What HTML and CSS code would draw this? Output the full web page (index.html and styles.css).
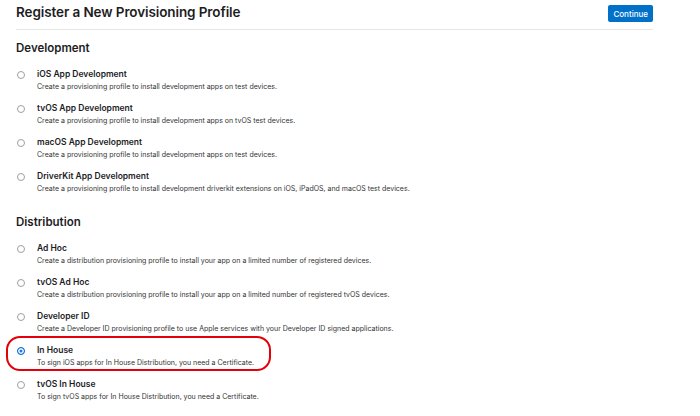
FILE: index.html
```html
<!DOCTYPE html>
<html lang="en">
<head>
  <meta charset="UTF-8" />
  <meta name="viewport" content="width=device-width, initial-scale=1.0" />
  <title>Register a New Provisioning Profile</title>
  <link rel="stylesheet" href="styles.css">
</head>
<body>
  <div class="page">
    <header class="top">
      <h1>Register a New Provisioning Profile</h1>
      <button class="btn" type="button">Continue</button>
    </header>

    <section class="group">
      <h2>Development</h2>
      <label class="opt">
        <span class="radio"></span>
        <span class="txt">
          <span class="name">iOS App Development</span>
          <span class="desc">Create a provisioning profile to install development apps on test devices.</span>
        </span>
      </label>
      <label class="opt">
        <span class="radio"></span>
        <span class="txt">
          <span class="name">tvOS App Development</span>
          <span class="desc">Create a provisioning profile to install development apps on tvOS test devices.</span>
        </span>
      </label>
      <label class="opt">
        <span class="radio"></span>
        <span class="txt">
          <span class="name">macOS App Development</span>
          <span class="desc">Create a provisioning profile to install development apps on test devices.</span>
        </span>
      </label>
      <label class="opt">
        <span class="radio"></span>
        <span class="txt">
          <span class="name">DriverKit App Development</span>
          <span class="desc">Create a provisioning profile to install development driverkit extensions on iOS, iPadOS, and macOS test devices.</span>
        </span>
      </label>
    </section>

    <section class="group">
      <h2>Distribution</h2>
      <label class="opt">
        <span class="radio"></span>
        <span class="txt">
          <span class="name">Ad Hoc</span>
          <span class="desc">Create a distribution provisioning profile to install your app on a limited number of registered devices.</span>
        </span>
      </label>
      <label class="opt">
        <span class="radio"></span>
        <span class="txt">
          <span class="name">tvOS Ad Hoc</span>
          <span class="desc">Create a distribution provisioning profile to install your app on a limited number of registered tvOS devices.</span>
        </span>
      </label>
      <label class="opt">
        <span class="radio"></span>
        <span class="txt">
          <span class="name">Developer ID</span>
          <span class="desc">Create a Developer ID provisioning profile to use Apple services with your Developer ID signed applications.</span>
        </span>
      </label>
      <label class="opt marked">
        <span class="radio on"></span>
        <span class="txt">
          <span class="name">In House</span>
          <span class="desc">To sign iOS apps for In House Distribution, you need a Certificate.</span>
        </span>
      </label>
      <label class="opt">
        <span class="radio"></span>
        <span class="txt">
          <span class="name">tvOS In House</span>
          <span class="desc">To sign tvOS apps for In House Distribution, you need a Certificate.</span>
        </span>
      </label>
    </section>
  </div>
</body>
</html>
```

FILE: styles.css
```css
body {
  margin: 0;
  background: #fff;
  color: #1d1d1f;
  font-family: Inter, "Liberation Sans", sans-serif;
}
.page {
  padding: 0 47px 0 16px;
}
.top {
  display: flex;
  justify-content: space-between;
  align-items: center;
  height: 29px;
  border-bottom: 1px solid #e6e6e6;
}
.top h1 {
  margin: 0;
  font-size: 13.5px;
  font-weight: 600;
  letter-spacing: -0.1px;
  padding-bottom: 5px;
}
.btn {
  background: #0070c9;
  color: #fff;
  border: none;
  border-radius: 2px;
  font-family: inherit;
  font-size: 8px;
  font-weight: 500;
  height: 17px;
  padding: 0 5px;
  margin-bottom: 2px;
}
.group h2 {
  margin: 0;
  font-size: 11.5px;
  font-weight: 600;
  height: 14px;
  line-height: 14px;
  padding-top: 11px;
  margin-bottom: 13px;
}
.group + .group h2 {
  padding-top: 11px;
}
.opt {
  display: flex;
  align-items: flex-start;
  height: 34px;
  position: relative;
}
.radio {
  width: 6px;
  height: 6px;
  border: 1px solid #a0a0a0;
  border-radius: 50%;
  margin: 3px 12px 0 1px;
  flex: none;
}
.radio.on {
  border-color: #0a68d8;
  background: #1a7cf0;
  box-shadow: inset 0 0 0 1.5px #fff;
}
.txt {
  display: flex;
  flex-direction: column;
}
.name {
  font-size: 8.5px;
  font-weight: 600;
  line-height: 13px;
}
.desc {
  font-size: 7px;
  color: #333;
  line-height: 11px;
}
.marked::after {
  content: "";
  position: absolute;
  left: -10px;
  top: -8px;
  width: 261px;
  height: 31px;
  border: 2px solid #e3000b;
  border-radius: 14px;
}
```
